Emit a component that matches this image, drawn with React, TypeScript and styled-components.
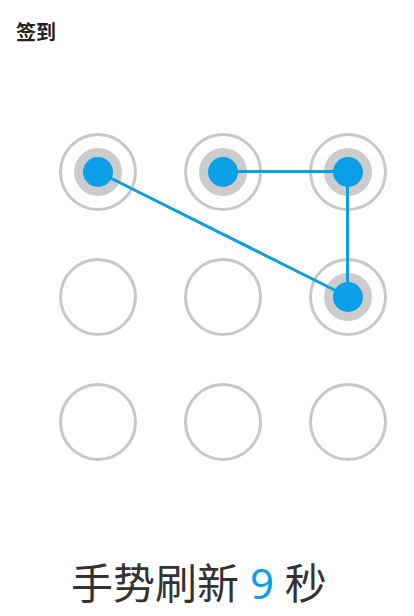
import React from "react";
import styled, { createGlobalStyle } from "styled-components";

const BLUE = "#0a9fe6";
const CELL = 125;

const GlobalStyle = createGlobalStyle`
	html, body {
		margin: 0;
		padding: 0;
		background: #ffffff;
		font-family: "Noto Sans", "Noto Sans CJK SC", sans-serif;
	}
`;

const Page = styled.div`
	width: 414px;
	height: 616px;
	overflow: hidden;
	display: flex;
	flex-direction: column;
`;

const Header = styled.header`
	padding: 21px 16px 0;
	height: 87px;
	box-sizing: border-box;
	font-size: 20px;
	font-weight: 700;
	color: #222222;
	line-height: 24px;
`;

const Pattern = styled.div`
	position: relative;
	z-index: 0;
	margin-left: 35px;
	margin-top: 22px;
	display: grid;
	grid-template-columns: repeat(3, ${CELL}px);
	grid-template-rows: repeat(3, ${CELL}px);
	width: ${CELL * 3}px;
`;

const Cell = styled.div`
	display: flex;
	align-items: center;
	justify-content: center;
`;

const Ring = styled.div`
	width: 78px;
	height: 78px;
	box-sizing: border-box;
	border: 3px solid #c8c8c8;
	border-radius: 50%;
	display: flex;
	align-items: center;
	justify-content: center;
`;

const Halo = styled.div`
	width: 48px;
	height: 48px;
	border-radius: 50%;
	background: #cccccc;
	display: flex;
	align-items: center;
	justify-content: center;
`;

const Dot = styled.div`
	position: relative;
	z-index: 2;
	width: 30px;
	height: 30px;
	border-radius: 50%;
	background: ${BLUE};
`;

const Lines = styled.svg`
	position: absolute;
	left: 0;
	top: 0;
	z-index: 1;
	pointer-events: none;
`;

const Caption = styled.div`
	margin-top: 69px;
	padding-left: 71px;
	font-family: "Noto Sans", "Noto Sans CJK SC", sans-serif;
	font-size: 42px;
	line-height: 60px;
	color: #333333;
	white-space: nowrap;
`;

const Count = styled.span`
	color: ${BLUE};
`;

const path = [
	[0, 0],
	[2, 1],
	[2, 0],
	[1, 0],
];

const selected = new Set(path.map(([c, r]) => `${c}-${r}`));

const center = (i: number) => CELL / 2 + CELL * i;

export default function App() {
	const cells = [];
	for (let r = 0; r < 3; r++) {
		for (let c = 0; c < 3; c++) {
			const on = selected.has(`${c}-${r}`);
			cells.push(
				<Cell key={`${c}-${r}`}>
					<Ring>
						{on && (
							<Halo>
								<Dot />
							</Halo>
						)}
					</Ring>
				</Cell>
			);
		}
	}

	return (
		<>
			<GlobalStyle />
			<Page>
				<Header>签到</Header>
				<Pattern>
					{cells}
					<Lines width={CELL * 3} height={CELL * 3}>
						<polyline
							points={path.map(([c, r]) => `${center(c)},${center(r)}`).join(" ")}
							fill="none"
							stroke={BLUE}
							strokeWidth={3}
							strokeLinejoin="round"
						/>
					</Lines>
				</Pattern>
				<Caption>
					手势刷新 <Count>9</Count> 秒
				</Caption>
			</Page>
		</>
	);
}
